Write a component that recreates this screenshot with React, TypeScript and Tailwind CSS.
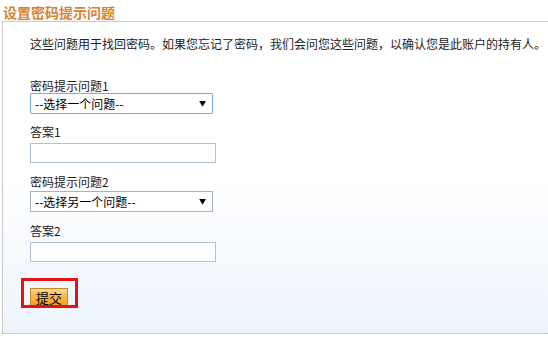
const FONT = "font-['SimSun','Noto_Sans_CJK_SC','Liberation_Sans',sans-serif]";

function FakeSelect({ text, focused }: { text: string; focused?: boolean }) {
  return (
    <div
      className={
        "flex h-[21px] w-[183px] items-center justify-between bg-white pl-[4px] pr-[6px] text-[12px] leading-[14px] text-black " +
        (focused
          ? "rounded-[2px] border border-[#7eaae2] shadow-[0_0_1px_#a8c8f0]"
          : "border border-[#a9b3be]")
      }
    >
      <span>{text}</span>
      <span className="text-[7px] leading-none">▼</span>
    </div>
  );
}

function TextBox() {
  return <div className="h-[20px] w-[186px] border border-[#b3c2d2] bg-white" />;
}

export default function App() {
  return (
    <div className={"h-[341px] w-[548px] overflow-hidden bg-white " + FONT}>
      <h1 className="h-[21px] pl-[3px] pt-[4px] text-[14px] font-bold leading-[16px] text-[#d9822e]">
        设置密码提示问题
      </h1>

      <div className="ml-[2px] flex h-[313px] flex-col items-start border-t border-b border-l border-[#cacaca] bg-gradient-to-b from-white via-white to-[#edf4fc] pl-[27px] pt-[14px] text-[#222]">
        <p className="whitespace-nowrap text-[12px] leading-[16px]">
          这些问题用于找回密码。如果您忘记了密码，我们会问您这些问题，以确认您是此账户的持有人。
        </p>

        <label className="mt-[27px] text-[12px] leading-[14px]">密码提示问题1</label>
        <FakeSelect text="--选择一个问题--" focused />

        <label className="mt-[11px] text-[12px] leading-[14px]">答案1</label>
        <div className="mt-[4px]">
          <TextBox />
        </div>

        <label className="mt-[12px] text-[12px] leading-[14px]">密码提示问题2</label>
        <div className="mt-[2px]">
          <FakeSelect text="--选择另一个问题--" />
        </div>

        <label className="mt-[12px] text-[12px] leading-[14px]">答案2</label>
        <div className="mt-[4px]">
          <TextBox />
        </div>

        <div className="relative mt-[22px]">
          <button
            type="button"
            className="h-[19px] w-[38px] border border-[#c8862a] bg-gradient-to-b from-[#ffd98a] via-[#fbb347] to-[#f59f1a] text-[13px] leading-[15px] text-black"
          >
            提交
          </button>
          {/* annotation box */}
          <div className="pointer-events-none absolute -left-[9px] -top-[6px] h-[30px] w-[57px] border-[3px] border-[#e3131c]" />
        </div>
      </div>
    </div>
  );
}
